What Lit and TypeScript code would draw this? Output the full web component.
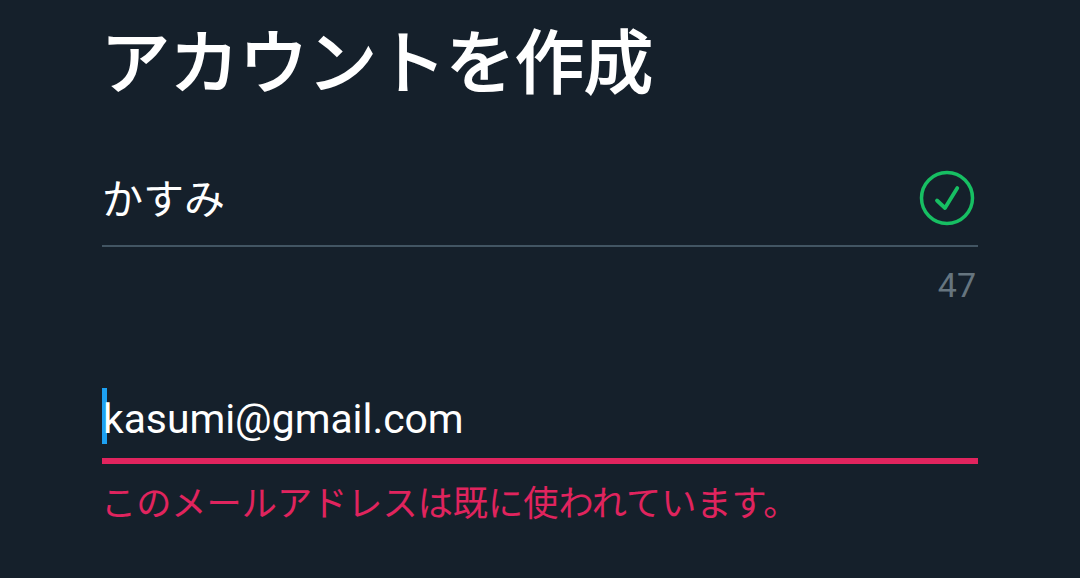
import { LitElement, html, css } from "lit";
import { customElement } from "lit/decorators.js";

@customElement("app-root")
export class AppRoot extends LitElement {
  static styles = css`
    :host {
      display: block;
      width: 1080px;
      height: 578px;
      overflow: hidden;
      background: #15202b;
      font-family: Roboto, "Noto Sans CJK JP", sans-serif;
      color: #fff;
    }
    .page {
      display: flex;
      flex-direction: column;
      padding: 0 102px;
    }
    h1 {
      margin: 0 0 0 -1px;
      height: 130px;
      padding: 18px 0 0 0;
      box-sizing: border-box;
      font-size: 69px;
      line-height: 80px;
      font-weight: 400;
      -webkit-text-stroke: 2px #fff;
      font-family: "Noto Sans CJK JP", sans-serif;
    }
    .name {
      display: flex;
      align-items: center;
      justify-content: space-between;
      height: 117px;
      box-sizing: border-box;
      border-bottom: 2px solid #425563;
      padding: 22px 3px 0 0;
      font-size: 41px;
    }
    .name span {
      font-family: "Noto Sans CJK JP", sans-serif;
      margin-top: -5px;
    }
    .name svg {
      margin-top: -2px;
    }
    .count {
      text-align: right;
      color: #66757f;
      font-size: 34px;
      line-height: 40px;
      padding: 18px 2px 0 0;
      height: 135px;
      box-sizing: border-box;
    }
    .email {
      display: flex;
      align-items: center;
      height: 76px;
      border-bottom: 6px solid #e0245e;
      font-size: 40.8px;
      box-sizing: content-box;
    }
    .caret {
      width: 5px;
      height: 56px;
      margin-top: -8px;
      background: #1da1f2;
      margin-right: -4px;
    }
    .email span {
      margin-top: -2px;
    }
    .error {
      margin-left: -1px;
      color: #e0245e;
      font-family: "Noto Sans CJK JP", sans-serif;
      font-size: 35.2px;
      line-height: 44px;
      padding: 15px 0 0 0;
    }
    svg { display: block; }
  `;
  render() {
    return html`<div class="page">
      <h1>アカウントを作成</h1>
      <div class="name">
        <span>かすみ</span>
        <svg width="56" height="56" viewBox="0 0 56 56" fill="none" stroke="#17bf63">
          <circle cx="28" cy="28" r="25.5" stroke-width="3.5"></circle>
          <path d="M18 30.5l8 7.5 12.3-20" stroke-width="3.8" stroke-linecap="round" stroke-linejoin="round"></path>
        </svg>
      </div>
      <div class="count">47</div>
      <div class="email"><div class="caret"></div><span>kasumi@gmail.com</span></div>
      <div class="error">このメールアドレスは既に使われています。</div>
    </div>`;
  }
}
